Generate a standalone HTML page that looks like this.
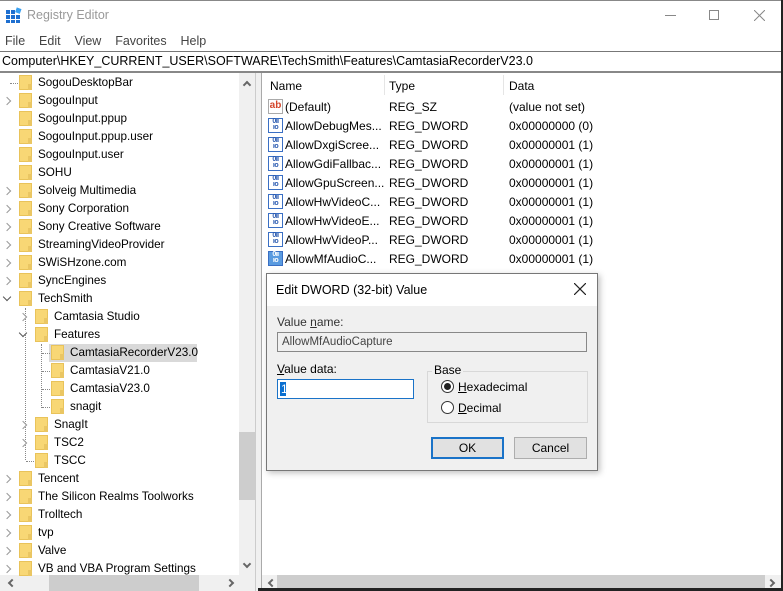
<!DOCTYPE html>
<html><head><style>
*{margin:0;padding:0;box-sizing:border-box}
body{width:783px;height:591px;overflow:hidden;background:#fff;font-family:"Liberation Sans",sans-serif;font-size:12px;color:#000;position:relative}
.a{position:absolute;white-space:nowrap}
.fold{position:absolute;width:13px;height:15px;background:#f8d775;border:1px solid #e9c35a}
.fold:after{content:"";position:absolute;right:-1px;bottom:-1px;width:4px;height:6px;background:#eac663}
.cr{position:absolute;width:6px;height:6px;border-right:1.5px solid #999;border-bottom:1.5px solid #999;transform:rotate(-45deg);background:#fff}
.cd{position:absolute;width:6px;height:6px;border-right:1.5px solid #555;border-bottom:1.5px solid #555;transform:rotate(45deg);background:#fff}
.sa{position:absolute;width:6px;height:6px;border-right:2px solid #666;border-bottom:2px solid #666}
.dw{position:absolute;width:15px;height:15px;border:1px solid #3a6fc4;background:#fff;font-size:7px;line-height:6px;color:#2a5ab0;font-weight:bold;text-align:center;letter-spacing:-0.5px}
</style></head><body>
<div class="a" style="left:0;top:0;width:783px;height:1px;background:#888"></div>
<svg class="a" style="left:6px;top:7px" width="16" height="16"><g fill="#1e6fd0"><rect x="0" y="3" width="4" height="4"/><rect x="5" y="3" width="4" height="4"/><rect x="0" y="8" width="4" height="4"/><rect x="5" y="8" width="4" height="4"/><rect x="10" y="8" width="4" height="4"/><rect x="0" y="13" width="4" height="3"/><rect x="5" y="13" width="4" height="3"/><rect x="10" y="13" width="4" height="3"/></g><rect x="10" y="1" width="5" height="5" fill="#3aa0f0" transform="rotate(20 12 3)"/></svg>
<div class="a" style="left:27px;top:8px;font-size:12.5px;color:#999">Registry Editor</div>
<div class="a" style="left:665px;top:15px;width:11px;height:1px;background:#888"></div>
<div class="a" style="left:709px;top:10px;width:10px;height:10px;border:1px solid #888"></div>
<svg class="a" style="left:754px;top:10px" width="11" height="11"><path d="M0 0L11 11M11 0L0 11" stroke="#888" stroke-width="1"/></svg>
<div class="a" style="left:781px;top:0;width:2px;height:591px;background:#222"></div>
<div class="a" style="left:5px;top:34px;font-size:12.5px;color:#444">File&nbsp;&nbsp;&nbsp;&nbsp;Edit&nbsp;&nbsp;&nbsp;&nbsp;View&nbsp;&nbsp;&nbsp;&nbsp;Favorites&nbsp;&nbsp;&nbsp;&nbsp;Help</div>
<div class="a" style="left:0;top:51px;width:781px;height:1px;background:#777"></div>
<div class="a" style="left:2px;top:54px;font-size:12.5px">Computer\HKEY_CURRENT_USER\SOFTWARE\TechSmith\Features\CamtasiaRecorderV23.0</div>
<div class="a" style="left:0;top:71px;width:781px;height:2px;background:#888"></div>
<div class="a" style="left:255px;top:73px;width:7px;height:518px;background:#f0f0f0;border-left:1px solid #ccc;border-right:1px solid #aaa"></div>
<div class="a" style="left:239px;top:73px;width:16px;height:502px;background:#f0f0f0"></div>
<div class="a" style="left:239px;top:432px;width:16px;height:68px;background:#cdcdcd"></div>
<div class="sa" style="left:244px;top:82px;transform:rotate(-135deg)"></div>
<div class="sa" style="left:244px;top:561px;transform:rotate(45deg)"></div>
<div class="a" style="left:0;top:575px;width:255px;height:16px;background:#f0f0f0"></div>
<div class="a" style="left:49px;top:575px;width:150px;height:16px;background:#cdcdcd"></div>
<div class="sa" style="left:9px;top:580px;transform:rotate(135deg)"></div>
<div class="sa" style="left:227px;top:580px;transform:rotate(-45deg)"></div>
<div class="a" style="left:262px;top:575px;width:519px;height:16px;background:#cdcdcd"></div>
<div class="a" style="left:262px;top:575px;width:15px;height:16px;background:#f0f0f0"></div>
<div class="a" style="left:765px;top:575px;width:16px;height:16px;background:#f0f0f0"></div>
<div class="a" style="left:258px;top:588px;width:525px;height:3px;background:#222"></div>
<div class="sa" style="left:269px;top:580px;transform:rotate(135deg)"></div>
<div class="sa" style="left:768px;top:580px;transform:rotate(-45deg)"></div>

<div id="tree"></div>
<div class="a" style="left:384px;top:75px;width:1px;height:20px;background:#e5e5e5"></div>
<div class="a" style="left:503px;top:75px;width:1px;height:20px;background:#e5e5e5"></div>
<div class="a" style="left:270px;top:79px">Name</div>
<div class="a" style="left:389px;top:79px">Type</div>
<div class="a" style="left:509px;top:79px">Data</div>
<div id="vals"></div>

<div class="a" style="left:266px;top:273px;width:332px;height:198px;background:#f0f0f0;border:1px solid #777;box-shadow:2px 2px 6px rgba(0,0,0,.25)">
 <div class="a" style="left:0;top:0;width:330px;height:32px;background:#fff"></div>
 <div class="a" style="left:9px;top:9px;font-size:12.5px">Edit DWORD (32-bit) Value</div>
 <svg class="a" style="left:307px;top:9px" width="12" height="12"><path d="M0 0L12 12M12 0L0 12" stroke="#222" stroke-width="1.2"/></svg>
 <div class="a" style="left:10px;top:41px;color:#333">Value <u>n</u>ame:</div>
 <div class="a" style="left:10px;top:58px;width:310px;height:20px;background:#f0f0f0;border:1px solid #888;padding:3px 4px;font-size:11.5px;color:#444">AllowMfAudioCapture</div>
 <div class="a" style="left:10px;top:88px"><u>V</u>alue data:</div>
 <div class="a" style="left:10px;top:105px;width:137px;height:20px;background:#fff;border:1px solid #1a73c8"><span class="a" style="left:2px;top:2px;width:6px;height:14px;background:#0a6fd0;color:#fff;padding-left:1px">1</span></div>
 <div class="a" style="left:160px;top:97px;width:161px;height:52px;border:1px solid #d8d8d8"></div>
 <div class="a" style="left:165px;top:89px;background:#f0f0f0;padding:0 2px">Base</div>
 <div class="a" style="left:174px;top:106px;width:13px;height:13px;border:1px solid #333;border-radius:50%;background:#fff"><div style="margin:2px;width:7px;height:7px;border-radius:50%;background:#222"></div></div>
 <div class="a" style="left:191px;top:106px"><u>H</u>exadecimal</div>
 <div class="a" style="left:174px;top:127px;width:13px;height:13px;border:1px solid #333;border-radius:50%;background:#fff"></div>
 <div class="a" style="left:191px;top:127px"><u>D</u>ecimal</div>
 <div class="a" style="left:164px;top:163px;width:73px;height:22px;border:2px solid #1a73c8;background:#e1e1e1;text-align:center;line-height:18px">OK</div>
 <div class="a" style="left:247px;top:163px;width:73px;height:22px;border:1px solid #adadad;background:#e1e1e1;text-align:center;line-height:20px">Cancel</div>
</div>

<script>
var t=[[0,'SogouDesktopBar',0],[0,'SogouInput',1],[0,'SogouInput.ppup',0],[0,'SogouInput.ppup.user',0],[0,'SogouInput.user',0],[0,'SOHU',0],[0,'Solveig Multimedia',1],[0,'Sony Corporation',1],[0,'Sony Creative Software',1],[0,'StreamingVideoProvider',1],[0,'SWiSHzone.com',1],[0,'SyncEngines',1],[0,'TechSmith',2],[1,'Camtasia Studio',1],[1,'Features',2],[2,'CamtasiaRecorderV23.0',0],[2,'CamtasiaV21.0',0],[2,'CamtasiaV23.0',0],[2,'snagit',0],[1,'SnagIt',1],[1,'TSC2',1],[1,'TSCC',0]];
t=t.concat([[0,'Tencent',1],[0,'The Silicon Realms Toolworks',1],[0,'Trolltech',1],[0,'tvp',1],[0,'Valve',1],[0,'VB and VBA Program Settings',1]]);
var h='';
h+='<div class="a" style="left:25px;top:308px;height:152px;border-left:1px dotted #888"></div>';
h+='<div class="a" style="left:41px;top:344px;height:64px;border-left:1px dotted #888"></div>';
t.forEach(function(r,i){var y=75+18*i,l=r[0],fx=19+16*l,tx=38+16*l;
if(i==15)h+='<div class="a" style="left:49px;top:'+(y-1)+'px;width:148px;height:18px;background:#d9d9d9"></div>';
if(r[2]==1)h+='<div class="cr" style="left:'+(fx-15)+'px;top:'+(y+5)+'px"></div>';
if(r[2]==2)h+='<div class="cd" style="left:'+(fx-15)+'px;top:'+(y+3)+'px"></div>';
if(r[2]==0&&(l>0||i==0))h+='<div class="a" style="left:'+(fx-9)+'px;top:'+(y+8)+'px;width:8px;border-top:1px dotted #888"></div>';
h+='<div class="fold" style="left:'+fx+'px;top:'+y+'px"></div><div class="a" style="left:'+tx+'px;top:'+(y+1)+'px;font-size:11.7px">'+r[1]+'</div>';});
document.getElementById('tree').innerHTML=h;
var v=[['(Default)','REG_SZ','(value not set)'],['AllowDebugMes...','REG_DWORD','0x00000000 (0)'],['AllowDxgiScree...','REG_DWORD','0x00000001 (1)'],['AllowGdiFallbac...','REG_DWORD','0x00000001 (1)'],['AllowGpuScreen...','REG_DWORD','0x00000001 (1)'],['AllowHwVideoC...','REG_DWORD','0x00000001 (1)'],['AllowHwVideoE...','REG_DWORD','0x00000001 (1)'],['AllowHwVideoP...','REG_DWORD','0x00000001 (1)'],['AllowMfAudioC...','REG_DWORD','0x00000001 (1)']];
h='';v.forEach(function(r,i){var y=99+19*i;
if(i==0)h+='<div class="a" style="left:268px;top:'+(y)+'px;width:15px;height:15px;border:1px solid #aaa;color:#d4452a;font-weight:bold;font-size:10px;line-height:11px;text-align:center">ab</div>';
else h+='<div class="dw" style="left:268px;top:'+y+'px;'+(i==8?'background:#5a9be0;color:#fff':'')+'">0ıı<br>ıo</div>';
h+='<div class="a" style="left:285px;top:'+(y+1)+'px">'+r[0]+'</div><div class="a" style="left:389px;top:'+(y+1)+'px">'+r[1]+'</div><div class="a" style="left:509px;top:'+(y+1)+'px">'+r[2]+'</div>';});
document.getElementById('vals').innerHTML=h;
</script>
</body></html>
